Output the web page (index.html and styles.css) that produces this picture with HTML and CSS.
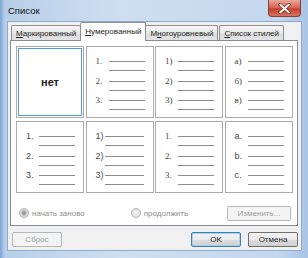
FILE: index.html
```html
<!DOCTYPE html>
<html lang="ru">
<head>
  <meta charset="UTF-8">
  <title>Список</title>
  <link rel="stylesheet" href="styles.css">
</head>
<body>

  <div class="window">

    <!-- title bar -->
    <div class="titlebar">
      <span class="title">Список</span>
      <span class="close">
        <svg width="13" height="11" viewBox="0 0 13 11">
          <path d="M2 1.5 L11 9.5 M11 1.5 L2 9.5" stroke="#6b2a22" stroke-width="3.2" stroke-linecap="round"/>
          <path d="M2 1.5 L11 9.5 M11 1.5 L2 9.5" stroke="#fff" stroke-width="1.8" stroke-linecap="round"/>
        </svg>
      </span>
    </div>

    <div class="client">

      <!-- tabs -->
      <div class="tabs">
        <div class="tab"><u>М</u>аркированный</div>
        <div class="tab active"><u>Н</u>умерованный</div>
        <div class="tab">М<u>н</u>огоуровневый</div>
        <div class="tab"><u>С</u>писок стилей</div>
      </div>

      <div class="panel">
        <div class="grid">

          <div class="cell selected"><span class="none">нет</span></div>

          <div class="cell serif">
            <div class="item"><span class="num">1.</span><span class="lines"></span></div>
            <div class="item"><span class="num">2.</span><span class="lines"></span></div>
            <div class="item"><span class="num">3.</span><span class="lines"></span></div>
          </div>

          <div class="cell serif">
            <div class="item"><span class="num">1)</span><span class="lines"></span></div>
            <div class="item"><span class="num">2)</span><span class="lines"></span></div>
            <div class="item"><span class="num">3)</span><span class="lines"></span></div>
          </div>

          <div class="cell serif">
            <div class="item"><span class="num">а)</span><span class="lines"></span></div>
            <div class="item"><span class="num">б)</span><span class="lines"></span></div>
            <div class="item"><span class="num">в)</span><span class="lines"></span></div>
          </div>

          <div class="cell sans">
            <div class="item"><span class="num">1.</span><span class="lines"></span></div>
            <div class="item"><span class="num">2.</span><span class="lines"></span></div>
            <div class="item"><span class="num">3.</span><span class="lines"></span></div>
          </div>

          <div class="cell sans tight">
            <div class="item"><span class="num">1)</span><span class="lines"></span></div>
            <div class="item"><span class="num">2)</span><span class="lines"></span></div>
            <div class="item"><span class="num">3)</span><span class="lines"></span></div>
          </div>

          <div class="cell serif">
            <div class="item"><span class="num">1.</span><span class="lines"></span></div>
            <div class="item"><span class="num">2.</span><span class="lines"></span></div>
            <div class="item"><span class="num">3.</span><span class="lines"></span></div>
          </div>

          <div class="cell sans">
            <div class="item"><span class="num">a.</span><span class="lines"></span></div>
            <div class="item"><span class="num">b.</span><span class="lines"></span></div>
            <div class="item"><span class="num">c.</span><span class="lines"></span></div>
          </div>

        </div>

        <!-- restart / continue -->
        <div class="options">
          <label class="radio checked"><span class="dot"></span>начать заново</label>
          <label class="radio second"><span class="dot"></span>продолжить</label>
          <button class="btn edit" disabled>Изменить...</button>
        </div>
      </div>

      <!-- dialog buttons -->
      <div class="buttons">
        <button class="btn reset" disabled>Сброс</button>
        <span class="spacer"></span>
        <button class="btn ok">OK</button>
        <button class="btn">Отмена</button>
      </div>

    </div>
  </div>

</body>
</html>
```

FILE: styles.css
```css
body {
  margin: 0;
  font-family: "Liberation Sans", Arial, sans-serif;
  font-size: 8px;
  color: #1e1e1e;
}

.window {
  width: 308px;
  height: 258px;
  display: flex;
  flex-direction: column;
  background: linear-gradient(90deg, #7ea5d6 0, #b7cfea 5px, #cfdff1 40%, #c4d7ee 90%, #a9c4e5 100%);
}

.titlebar {
  height: 21px;
  display: flex;
  justify-content: space-between;
  align-items: flex-start;
}

.title {
  margin: 5px 0 0 8px;
  font-size: 9.5px;
  color: #111;
}

.close {
  width: 31px;
  height: 16px;
  margin-right: 7px;
  display: flex;
  align-items: center;
  justify-content: center;
  border: 1px solid #8a3e36;
  border-top: none;
  border-radius: 0 0 4px 4px;
  background: linear-gradient(#e9a89c, #d4614f 50%, #c2402d 55%, #d8735e);
}

.client {
  flex: 1;
  margin: 0 6px 7px 7px;
  padding: 0 3px 0 2px;
  background: #f0f0f0;
  border: 1px solid #90aacb;
  display: flex;
  flex-direction: column;
}

.tabs {
  display: flex;
  align-items: flex-end;
  padding-left: 1px;
  margin-bottom: -1px;
}

.tab {
  height: 15px;
  padding: 0 4px;
  margin-right: 1px;
  line-height: 15px;
  border: 1px solid #8e8f8f;
  border-bottom: none;
  border-radius: 2px 2px 0 0;
  background: linear-gradient(#f7f7f7, #e6e6e6 50%, #dadada 51%, #e5e5e5);
  white-space: nowrap;
}

.tab.active {
  position: relative;
  height: 18px;
  line-height: 17px;
  margin: 0 -1px 0 -2px;
  padding: 0 4px;
  background: #fff;
}

.panel {
  background: #fff;
  border: 1px solid #898c95;
  padding: 5px 5px 4px 5px;
}

.grid {
  display: grid;
  grid-template-columns: repeat(4, 68px);
  grid-template-rows: repeat(2, 72px);
  column-gap: 1.5px;
  row-gap: 3px;
}

.cell {
  border: 1px solid #ababab;
  padding: 9px 0 0 9px;
  box-sizing: border-box;
}

.cell.selected {
  display: flex;
  align-items: center;
  justify-content: center;
  padding: 0;
  box-shadow: inset 0 0 0 1px #fff, inset 0 0 0 2px #4f9be6;
}

.none {
  font-size: 11px;
  font-weight: bold;
  color: #222;
}

.item {
  display: flex;
  height: 19.5px;
}

.num {
  width: 13px;
  line-height: 10px;
  color: #444;
}

.serif .num {
  font-family: "Liberation Serif", "Times New Roman", serif;
  font-size: 9px;
}

.sans .num {
  font-family: "Liberation Sans", Arial, sans-serif;
  font-size: 9px;
}

.tight .num {
  width: 9px;
}

.lines {
  width: 36px;
  height: 8px;
  margin-top: 5px;
  border-top: 1px solid #8c8c8c;
  border-bottom: 1px solid #8c8c8c;
}

.tight .lines {
  width: 39px;
}

.options {
  display: flex;
  align-items: center;
  height: 16px;
  margin-top: 12px;
  color: #8d8d8d;
}

.radio {
  display: flex;
  align-items: center;
  margin-left: 3px;
}

.radio.second {
  margin-left: 46px;
}

.dot {
  width: 8px;
  height: 8px;
  margin-right: 3px;
  border: 1px solid #b0b0b0;
  border-radius: 50%;
  background: radial-gradient(#f4f4f4, #dcdcdc);
  box-sizing: content-box;
}

.checked .dot {
  background: radial-gradient(#8f8f8f 0, #a8a8a8 2px, #dcdcdc 3px);
}

.btn {
  height: 15px;
  padding: 0;
  font-family: "Liberation Sans", Arial, sans-serif;
  font-size: 8px;
  color: #1e1e1e;
  border: 1px solid #707070;
  border-radius: 2px;
  background: linear-gradient(#f2f2f2, #ebebeb 50%, #dddddd 51%, #cfcfcf);
}

.btn:disabled {
  color: #a0a0a0;
  border-color: #b5b8ba;
  background: #f4f4f4;
}

.edit {
  width: 64px;
  margin-left: auto;
  margin-right: 1px;
}

.buttons {
  display: flex;
  align-items: center;
  margin-top: 6px;
}

.spacer {
  flex: 1;
}

.buttons .btn {
  width: 50px;
}

.reset {
  margin-left: 2px;
}

.ok {
  margin-right: 7px;
  border-color: #3c7fb1;
  box-shadow: inset 0 0 0 1px #9fd4f7;
}
```
